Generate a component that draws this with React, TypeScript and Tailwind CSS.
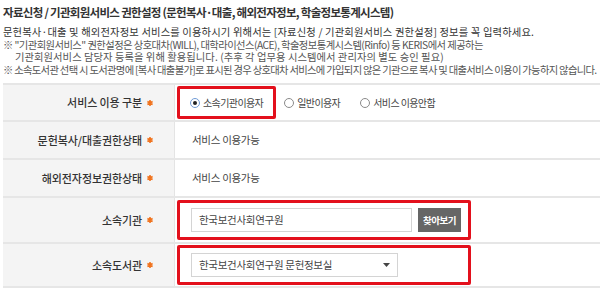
import React from "react";

const font = { fontFamily: '"Noto Sans CJK KR", "Noto Sans", sans-serif' };

const Req = () => (
  <svg className="ml-[5px]" width="6" height="6" viewBox="0 0 6 6">
    <path d="M3 0v6M0.4 1.5l5.2 3M0.4 4.5l5.2-3" stroke="#f0731e" strokeWidth="1.6" />
  </svg>
);

const Label = ({ children }: { children: React.ReactNode }) => (
  <div className="w-[172px] shrink-0 bg-[#f4f4f4] border-r border-[#e4e4e4] flex items-center justify-end pr-[21px] text-[11px] font-medium text-[#333] tracking-[-0.1px]">
    {children}
    <Req />
  </div>
);

const Radio = ({ checked, label }: { checked?: boolean; label: string }) => (
  <label className="flex items-center gap-[3px] whitespace-nowrap text-[10px] text-[#444] tracking-[-0.6px]">
    <span
      className={
        checked
          ? "w-[10px] h-[10px] rounded-full border border-[#6f9bd6] bg-white flex items-center justify-center"
          : "w-[10px] h-[10px] rounded-full border border-[#8a8a8a] bg-white flex items-center justify-center"
      }
    >
      {checked && <span className="w-[4px] h-[4px] rounded-full bg-[#222]" />}
    </span>
    {label}
  </label>
);

export default function App() {
  return (
    <div className="w-[600px] h-[290px] bg-white overflow-hidden pl-[3px]" style={font}>
      <h1 className="text-[11.5px] font-bold text-[#333] tracking-[-0.7px] leading-[16px] pt-[4px] whitespace-nowrap">
        자료신청 / 기관회원서비스 권한설정 (문헌복사·대출, 해외전자정보, 학술정보통계시스템)
      </h1>
      <div className="mt-[6px] text-[10.3px] text-[#555] leading-[12.5px] whitespace-nowrap">
        <p className="text-[#333] tracking-[0.15px]">문헌복사·대출 및 해외전자정보 서비스를 이용하시기 위해서는 [자료신청 / 기관회원서비스 권한설정] 정보를 꼭 입력하세요.</p>
        <p className="tracking-[-0.55px]">※ "기관회원서비스" 권한설정은 상호대차(WILL), 대학라이선스(ACE), 학술정보통계시스템(Rinfo) 등 KERIS에서 제공하는</p>
        <p className="pl-[12px] tracking-[0.05px]">기관회원서비스 담당자 등록을 위해 활용됩니다. (추후 각 업무용 시스템에서 관리자의 별도 승인 필요)</p>
        <p className="tracking-[-0.68px]">※ 소속도서관 선택 시 도서관명에 [복사 대출불가]로 표시된 경우 상호대차 서비스에 가입되지 않은 기관으로 복사 및 대출서비스 이용이 가능하지 않습니다.</p>
      </div>

      <div className="mt-[7px] border-t-2 border-[#e6e6e6]">
        <div className="flex h-[37px] border-b-2 border-[#e6e6e6]">
          <Label>서비스 이용 구분</Label>
          <div className="flex items-center pl-[2px]">
            <div className="h-[33px] border-[3px] border-[#e3101c] rounded-[2px] flex items-center pl-[10px] pr-[10px]">
              <Radio checked label="소속기관이용자" />
            </div>
            <div className="ml-[8px]">
              <Radio label="일반이용자" />
            </div>
            <div className="ml-[20px]">
              <Radio label="서비스 이용안함" />
            </div>
          </div>
        </div>
        <div className="flex h-[38px] border-b-2 border-[#e6e6e6]">
          <Label>문헌복사/대출권한상태</Label>
          <div className="flex items-center pl-[17px] text-[10.5px] text-[#444] tracking-[-0.3px]">서비스 이용가능</div>
        </div>
        <div className="flex h-[38px] border-b-2 border-[#e6e6e6]">
          <Label>해외전자정보권한상태</Label>
          <div className="flex items-center pl-[17px] text-[10.5px] text-[#444] tracking-[-0.3px]">서비스 이용가능</div>
        </div>
        <div className="flex h-[46px] border-b-2 border-[#e6e6e6]">
          <Label>소속기관</Label>
          <div className="flex items-center pl-[2px]">
            <div className="h-[40px] w-[294px] border-[3px] border-[#e3101c] rounded-[2px] flex items-center pl-[11px] gap-[6px]">
              <div className="w-[221px] h-[24px] border border-[#d4d4d4] flex items-center pl-[7px] text-[10.5px] text-[#444] tracking-[-0.3px]">
                한국보건사회연구원
              </div>
              <button className="w-[43px] h-[24px] bg-[#666] text-white text-[9.5px] font-bold tracking-[-0.5px]">
                찾아보기
              </button>
            </div>
          </div>
        </div>
        <div className="flex h-[44px] border-b-2 border-[#e6e6e6]">
          <Label>소속도서관</Label>
          <div className="flex items-center pl-[2px]">
            <div className="h-[40px] w-[294px] border-[3px] border-[#e3101c] rounded-[2px] flex items-center pl-[11px]">
              <div className="w-[207px] h-[24px] border border-[#d4d4d4] flex items-center justify-between pl-[7px] pr-[7px] text-[10.5px] text-[#444] tracking-[-0.3px]">
                <span>한국보건사회연구원 문헌정보실</span>
                <svg width="7" height="4" viewBox="0 0 7 4"><path d="M0 0h7L3.5 4z" fill="#444" /></svg>
              </div>
            </div>
          </div>
        </div>
      </div>
    </div>
  );
}
